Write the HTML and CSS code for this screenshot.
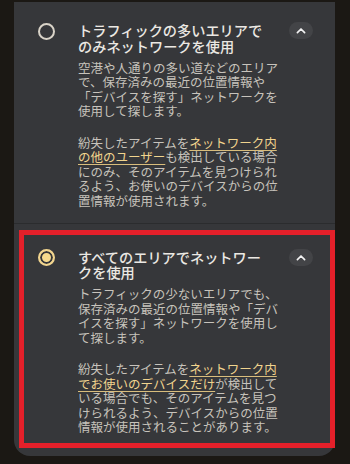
FILE: index.html
```html
<!DOCTYPE html>
<html lang="ja">
<head>
<meta charset="utf-8">
<title>ネットワーク設定</title>
<link rel="stylesheet" href="styles.css">
</head>
<body>
<div class="panel">
  <div class="option">
    <span class="radio"></span>
    <div class="content">
      <div class="title">トラフィックの多いエリアでのみネットワークを使用</div>
      <p class="desc">空港や人通りの多い道などのエリアで、保存済みの最近の位置情報や「デバイスを探す」ネットワークを使用して探します。</p>
      <p class="desc para">紛失したアイテムを<a class="link">ネットワーク内の他のユーザー</a>も検出している場合にのみ、そのアイテムを見つけられるよう、お使いのデバイスからの位置情報が使用されます。</p>
    </div>
    <button class="toggle" type="button"><svg width="10" height="7" viewBox="0 0 10 7"><polyline points="1.4,5.6 5,2 8.6,5.6" fill="none" stroke="#f2f2f2" stroke-width="1.7" stroke-linecap="round" stroke-linejoin="round"/></svg></button>
  </div>
  <div class="divider"></div>
  <div class="option option-last">
    <span class="radio radio-on"></span>
    <div class="content">
      <div class="title">すべてのエリアでネットワークを使用</div>
      <p class="desc">トラフィックの少ないエリアでも、保存済みの最近の位置情報や「デバイスを探す」ネットワークを使用して探します。</p>
      <p class="desc para">紛失したアイテムを<a class="link">ネットワーク内でお使いのデバイスだけ</a>が検出している場合でも、そのアイテムを見つけられるよう、デバイスからの位置情報が使用されることがあります。</p>
    </div>
    <button class="toggle" type="button"><svg width="10" height="7" viewBox="0 0 10 7"><polyline points="1.4,5.6 5,2 8.6,5.6" fill="none" stroke="#f2f2f2" stroke-width="1.7" stroke-linecap="round" stroke-linejoin="round"/></svg></button>
    <div class="highlight"></div>
  </div>
</div>
</body>
</html>
```
FILE: styles.css
```css
html, body {
  margin: 0;
  padding: 0;
}
body {
  width: 350px;
  height: 464px;
  overflow: hidden;
  background: #1b1814;
  font-family: "Noto Sans CJK JP", "Noto Sans", sans-serif;
}
.panel {
  margin: 2px 0 0 14px;
  width: 321px;
  background: #36373a;
  border-radius: 0 0 16px 16px;
}
.option {
  display: grid;
  grid-template-columns: 64px 1fr 24px;
  align-items: start;
  padding: 21px 22px 14.5px 0;
}
.option-last {
  position: relative;
  padding-top: 26px;
  padding-bottom: 21px;
}
.divider {
  height: 1px;
  background: #2b2c2e;
}
.radio {
  justify-self: center;
  margin-top: -0.5px;
  width: 13px;
  height: 13px;
  border: 2px solid #d9d3c8;
  border-radius: 50%;
}
.radio-on {
  border-color: #f2d58f;
  background: #f6d98c;
  box-shadow: inset 0 0 0 2px #36373a;
}
.content {
  min-width: 0;
}
.title {
  width: 196px;
  font-size: 14.2px;
  line-height: 15.5px;
  font-weight: 500;
  color: #ebe8e3;
}
.desc {
  width: 204px;
  margin: 6.5px 0 0;
  font-size: 12.5px;
  line-height: 14.5px;
  color: #c7c3bc;
}
.desc.para {
  margin-top: 17px;
}
.link {
  color: #f1d48e;
  text-decoration: underline;
  text-decoration-color: #d9bd7c;
  text-underline-offset: 2px;
  text-decoration-thickness: 1px;
}
.toggle {
  margin: 0;
  margin-top: -1px;
  padding: 0;
  width: 24px;
  height: 17px;
  border: none;
  border-radius: 9px;
  background: #434447;
  display: flex;
  align-items: center;
  justify-content: center;
}
.highlight {
  position: absolute;
  top: 6px;
  left: 5px;
  right: 0;
  bottom: 8px;
  border: 5px solid #e4202a;
  pointer-events: none;
}
```
